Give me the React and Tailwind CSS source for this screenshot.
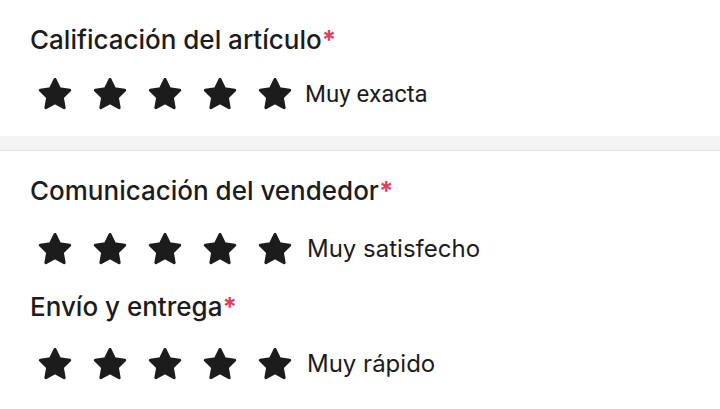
import React from 'react';

// Rounded five-point star used for the rating rows
function Star() {
  return (
    <svg viewBox="0 0 24 24" className="w-9 h-9 shrink-0" fill="#1c1c1c" stroke="#1c1c1c" strokeWidth="2" strokeLinejoin="round">
      <polygon points="12 2.3 15 8.5 21.8 9.5 16.9 14.3 18.1 21.1 12 17.8 5.9 21.1 7.1 14.3 2.2 9.5 9 8.5" />
    </svg>
  );
}

function RatingRow({ label, labelClass }) {
  return (
    <div className="flex items-center pl-[37px]">
      <div className="flex items-center gap-[19px]">
        <Star />
        <Star />
        <Star />
        <Star />
        <Star />
      </div>
      <span className={`leading-none text-[#1c1c1c] ${labelClass}`}>{label}</span>
    </div>
  );
}

function Title({ children }) {
  return (
    <h2 className="pl-[30px] text-[26px] leading-[36px] font-medium text-[#1c1c1c] font-['Inter',sans-serif]">
      {children}
      <span className="font-bold text-[#e0405e]">*</span>
    </h2>
  );
}

export default function App() {
  return (
    <div className="w-[720px] h-[409px] bg-white overflow-hidden">
      {/* item rating */}
      <section className="pt-[22px] h-[136px]">
        <Title>Calificación del artículo</Title>
        <div className="mt-[18px]">
          <RatingRow label="Muy exacta" labelClass="ml-[12px] text-[24px] font-['Roboto',sans-serif]" />
        </div>
      </section>

      <div className="h-[15px] bg-[#f4f4f4] border-b border-[#e2e2e2]" />

      {/* seller rating */}
      <section className="pt-[22px]">
        <Title>Comunicación del vendedor</Title>
        <div className="mt-[22px]">
          <RatingRow label="Muy satisfecho" labelClass="ml-[14px] text-[24px] font-['Inter',sans-serif]" />
        </div>
        <div className="mt-[22px]">
          <Title>Envío y entrega</Title>
        </div>
        <div className="mt-[21px]">
          <RatingRow label="Muy rápido" labelClass="ml-[14px] text-[24px] font-['Inter',sans-serif]" />
        </div>
      </section>
    </div>
  );
}
